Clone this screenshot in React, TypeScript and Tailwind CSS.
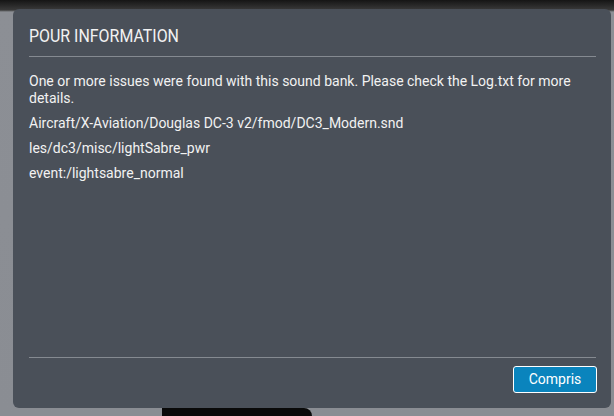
export default function App() {
  const lines = [
    "Aircraft/X-Aviation/Douglas DC-3 v2/fmod/DC3_Modern.snd",
    "les/dc3/misc/lightSabre_pwr",
    "event:/lightsabre_normal",
  ];

  return (
    <div className="w-[614px] h-[416px] overflow-hidden bg-[linear-gradient(to_bottom,#151515_0px,#3a3a3a_10px,#8c8f95_12px,#8a8d93_100%)] pt-[9px] pl-[13px] pr-[3px] flex flex-col font-['Roboto','Liberation_Sans',sans-serif]">
      <div className="h-[399px] rounded-[6px] bg-[#4a5059] px-4 flex flex-col text-[#f2f2f2]">
        {/* Header */}
        <div className="h-[48px] flex items-end pb-[11px] border-b border-[#858a91] mr-[-1px]">
          <h1 className="text-[18px] leading-none inline-block scale-x-[0.885] origin-left whitespace-nowrap">
            POUR INFORMATION
          </h1>
        </div>

        {/* Body */}
        <div className="flex-1 pt-4 flex flex-col gap-2 text-[14px] leading-[17px]">
          <p>
            One or more issues were found with this sound bank. Please check the Log.txt for more
            details.
          </p>
          {lines.map((l) => (
            <p key={l}>{l}</p>
          ))}
        </div>

        {/* Footer */}
        <div className="border-t border-[#858a91] h-[51px] flex items-start justify-end pt-[8px] mr-[-1px]">
          <button className="w-[84px] h-[27px] bg-[#0a84bd] border border-white rounded-[3px] text-[14px] text-white mr-[-1px]">
            Compris
          </button>
        </div>
      </div>
      <div className="flex-1 flex">
        <div className="ml-[149px] w-[150px] bg-[#0a0a0a] rounded-tr-[10px]" />
      </div>
    </div>
  );
}
